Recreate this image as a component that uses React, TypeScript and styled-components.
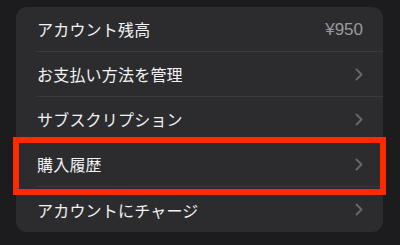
import React from 'react'
import styled, { createGlobalStyle } from 'styled-components'

const GlobalStyle = createGlobalStyle`
    html, body {
        margin: 0;
        padding: 0;
        background: #1c1c1e;
    }
    body {
        font-family: "Noto Sans CJK JP", "Noto Sans", sans-serif;
        -webkit-font-smoothing: antialiased;
    }
`

type Item = {
    label: string
    value?: string
    highlight?: boolean
}

const items: Item[] = [
    { label: 'アカウント残高', value: '¥950' },
    { label: 'お支払い方法を管理' },
    { label: 'サブスクリプション' },
    { label: '購入履歴', highlight: true },
    { label: 'アカウントにチャージ' },
]

const Chevron = () => (
    <svg width="8" height="13" viewBox="0 0 8 13" fill="none">
        <polyline
            points="1.5,1.5 6.5,6.5 1.5,11.5"
            stroke="#67676c"
            strokeWidth="1.9"
            strokeLinecap="round"
            strokeLinejoin="round"
        />
    </svg>
)

const App: React.FunctionComponent = () => {
    return (
        <Page>
            <GlobalStyle />
            <Card>
                {items.map((item, index) => (
                    <Row key={index}>
                        <RowContent last={index === items.length - 1}>
                            <Label>{item.label}</Label>
                            {item.value ? <Value>{item.value}</Value> : <Chevron />}
                        </RowContent>
                        {item.highlight && <Highlight />}
                    </Row>
                ))}
            </Card>
        </Page>
    )
}

const Page = styled.div`
    width: 400px;
    height: 245px;
    padding: 7px 17px 0 16px;
    box-sizing: border-box;
    background: #1c1c1e;
`

const Card = styled.div`
    display: flex;
    flex-direction: column;
    background: #2c2c2e;
    border-radius: 11px;
`

const Row = styled.div`
    position: relative;
    height: 45px;
    padding-left: 21px;
    display: flex;
`

const RowContent = styled.div<{ last?: boolean }>`
    flex: 1;
    display: flex;
    align-items: center;
    justify-content: space-between;
    padding-right: 20px;
    border-bottom: ${p => (p.last ? 'none' : '1px solid #3a3a3c')};
`

const Label = styled.span`
    color: #f2f2f4;
    font-size: 16px;
    letter-spacing: 0.2px;
    line-height: 1;
`

const Value = styled.span`
    color: #9a9aa0;
    font-family: "Liberation Sans", Arial, sans-serif;
    font-size: 17px;
    line-height: 1;
`

const Highlight = styled.div`
    position: absolute;
    top: -5px;
    bottom: -8px;
    left: -3px;
    right: -3px;
    border: 6px solid #ff2a00;
    pointer-events: none;
`

export default App
